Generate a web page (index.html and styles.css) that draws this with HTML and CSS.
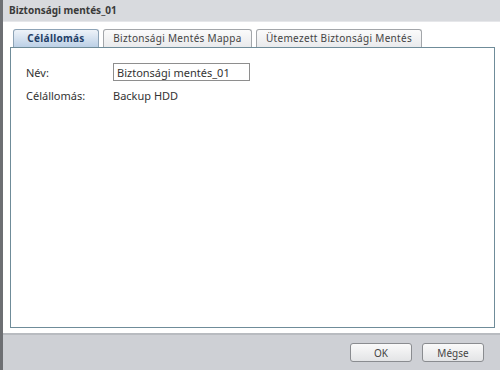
FILE: index.html
```html
<!DOCTYPE html>
<html lang="hu">
<head>
    <meta charset="UTF-8">
    <title>Biztonsági mentés_01</title>
    <link rel="stylesheet" href="styles.css">
</head>
<body>
    <div class="window">
        <div class="titlebar">Biztonsági mentés_01</div>
        <div class="main">
            <div class="tabs">
                <div class="tab active tab-dest">Célállomás</div>
                <div class="tab tab-folder">Biztonsági Mentés Mappa</div>
                <div class="tab tab-sched">Ütemezett Biztonsági Mentés</div>
            </div>
            <div class="panel">
                <div class="row">
                    <span class="label">Név:</span>
                    <input class="field" type="text" value="Biztonsági mentés_01">
                </div>
                <div class="row">
                    <span class="label">Célállomás:</span>
                    <span class="value">Backup HDD</span>
                </div>
            </div>
        </div>
        <div class="footer">
            <button class="btn">OK</button>
            <button class="btn">Mégse</button>
        </div>
    </div>
</body>
</html>
```

FILE: styles.css
```css
body {
    margin: 0;
    padding: 0;
    font-family: "Noto Sans", "DejaVu Sans", sans-serif;
    font-size: 11px;
    color: #333;
    background: #fff;
}
.window {
    width: 497px;
    height: 370px;
    border-left: 3px solid #6d6f73;
    display: flex;
    flex-direction: column;
}
.titlebar {
    height: 21px;
    line-height: 20px;
    padding-left: 6px;
    background: #d8dade;
    border-bottom: 1px solid #e6e7ea;
    font-size: 10px;
    font-weight: bold;
    color: #3a3a3a;
}
.main {
    flex: 1;
    padding: 7px 5px 5px 7px;
    display: flex;
    flex-direction: column;
    border-bottom: 2px solid #b8bbc0;
}
.tabs {
    display: flex;
    gap: 4px;
    padding-left: 3px;
    height: 18px;
}
.tab {
    box-sizing: border-box;
    text-align: center;
    line-height: 16px;
    font-size: 10px;
    border: 1px solid #a3a6aa;
    border-bottom: none;
    border-radius: 3px 3px 0 0;
    background: linear-gradient(#fbfbfb, #e9eaec);
    color: #444;
    letter-spacing: 0.3px;
}
.tab-dest {
    width: 86px;
}
.tab-folder {
    width: 149px;
}
.tab-sched {
    width: 166px;
}
.tab.active {
    border-color: #8da3b6;
    background: linear-gradient(#eef3f9, #bcd0e6);
    color: #1f3e66;
    font-weight: bold;
}
.panel {
    flex: 1;
    border: 1px solid #6f8c99;
    padding: 15px 15px;
    display: flex;
    flex-direction: column;
    gap: 5px;
}
.row {
    display: flex;
    align-items: center;
    height: 18px;
}
.label {
    width: 87px;
}
.field {
    width: 137px;
    height: 18px;
    box-sizing: border-box;
    border: 1px solid #8e8e8e;
    padding: 0 3px;
    font-family: inherit;
    font-size: 11px;
    color: #333;
}
.footer {
    height: 35px;
    background: #ced0d5;
    display: flex;
    justify-content: flex-end;
    align-items: center;
    gap: 10px;
    padding-right: 16px;
}
.btn {
    width: 62px;
    height: 19px;
    border: 1px solid #8a8c90;
    border-radius: 3px;
    background: linear-gradient(#fafafa, #e3e4e6);
    font-family: inherit;
    font-size: 10px;
    color: #444;
}
```
